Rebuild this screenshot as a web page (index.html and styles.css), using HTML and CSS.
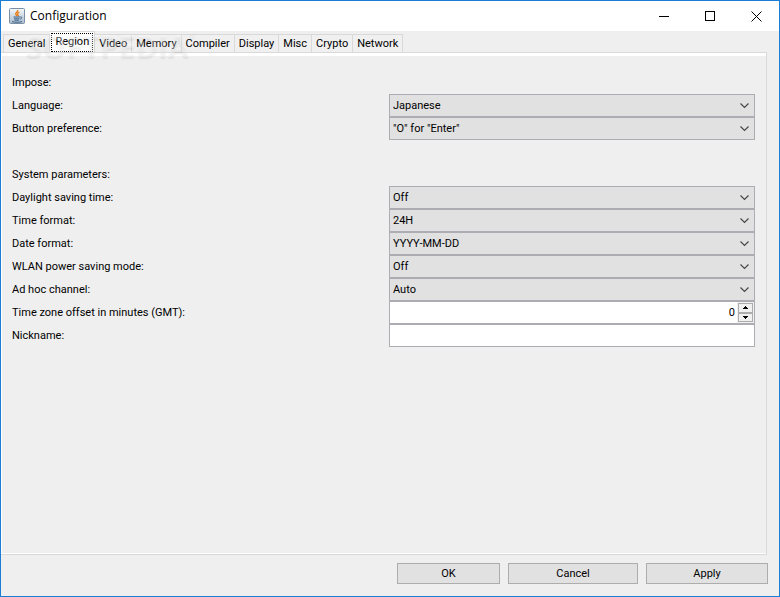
FILE: index.html
```
<!DOCTYPE html>
<html lang="en">
<head>
<meta charset="utf-8">
<title>Configuration</title>
<link rel="stylesheet" href="styles.css">
</head>
<body>
<div class="window">
  <header class="titlebar">
    <svg class="app-icon" width="16" height="16" viewBox="0 0 16 16">
      <defs>
        <linearGradient id="tile" x1="0" y1="0" x2="0" y2="1">
          <stop offset="0" stop-color="#f4f7fa"/>
          <stop offset="1" stop-color="#a9bdce"/>
        </linearGradient>
      </defs>
      <rect x=".5" y=".5" width="15" height="15" rx="1" fill="url(#tile)" stroke="#7b8fa3"/>
      <path d="M8.6 2c.8 1.800-2.800 2.600-1.800 4.400.3.600.9 1 1.200 1.600M10.300 4.200C8.500 5 8 5.800 9 7c.4.500.2 1-.2 1.400" fill="none" stroke="#e8811c" stroke-width="1.400"/>
      <path d="M4.500 9h6.500M5 10.800h5.500M5.500 12.200h4.500M3 13.500c2 1 8 1 10 0M11.200 9c2-.6 2.300 1.500-.2 2.300" fill="none" stroke="#3d6288"/>
    </svg>
    <h1 class="title">Configuration</h1>
    <div class="window-buttons">
      <button type="button" aria-label="Minimize"><svg width="11" height="11"><path d="M0 5.500h10" stroke="#000"/></svg></button>
      <button type="button" aria-label="Maximize"><svg width="11" height="11"><path d="M.5.500h9v9h-9z" fill="none" stroke="#000"/></svg></button>
      <button type="button" aria-label="Close"><svg width="11" height="11"><path d="M.5.500l10 10M10.500.500l-10 10" stroke="#000"/></svg></button>
    </div>
  </header>

  <nav class="tabs" role="tablist">
    <button class="tab" type="button" role="tab">General</button>
    <button class="tab selected" type="button" role="tab" aria-selected="true"><span>Region</span></button>
    <button class="tab" type="button" role="tab">Video</button>
    <button class="tab" type="button" role="tab">Memory</button>
    <button class="tab" type="button" role="tab">Compiler</button>
    <button class="tab" type="button" role="tab">Display</button>
    <button class="tab" type="button" role="tab">Misc</button>
    <button class="tab" type="button" role="tab">Crypto</button>
    <button class="tab" type="button" role="tab">Network</button>
    <div class="watermark" aria-hidden="true">SOFTPEDIA<sup>®</sup></div>
  </nav>

  <main class="panel">
    <section class="group">
      <h2>Impose:</h2>
      <div class="row">
        <label for="language">Language:</label>
        <select id="language"><option>Japanese</option></select>
      </div>
      <div class="row">
        <label for="button-pref">Button preference:</label>
        <select id="button-pref"><option>"O" for "Enter"</option></select>
      </div>
    </section>
    <section class="group">
      <h2>System parameters:</h2>
      <div class="row">
        <label for="daylight">Daylight saving time:</label>
        <select id="daylight"><option>Off</option></select>
      </div>
      <div class="row">
        <label for="time-format">Time format:</label>
        <select id="time-format"><option>24H</option></select>
      </div>
      <div class="row">
        <label for="date-format">Date format:</label>
        <select id="date-format"><option>YYYY-MM-DD</option></select>
      </div>
      <div class="row">
        <label for="wlan">WLAN power saving mode:</label>
        <select id="wlan"><option>Off</option></select>
      </div>
      <div class="row">
        <label for="adhoc">Ad hoc channel:</label>
        <select id="adhoc"><option>Auto</option></select>
      </div>
      <div class="row">
        <label for="timezone">Time zone offset in minutes (GMT):</label>
        <div class="spinner">
          <input id="timezone" type="text" inputmode="numeric" value="0">
          <div class="arrows">
            <button type="button" aria-label="Increase"><svg width="5" height="3"><path d="M2 0h1v1h1v1h1v1H0V2h1V1h1z"/></svg></button>
            <button type="button" aria-label="Decrease"><svg width="5" height="3"><path d="M0 0h5v1H4v1H3v1H2V2H1V1H0z"/></svg></button>
          </div>
        </div>
      </div>
      <div class="row">
        <label for="nickname">Nickname:</label>
        <input id="nickname" class="text" type="text">
      </div>
    </section>
  </main>

  <footer class="actions">
    <button class="ok" type="button">OK</button>
    <button class="cancel" type="button">Cancel</button>
    <button class="apply" type="button">Apply</button>
  </footer>
</div>
</body>
</html>
```
FILE: styles.css
```
* {
  box-sizing: border-box;
}
body {
  margin: 0;
  font: 11px/14px Tahoma, Roboto, sans-serif;
  color: #000;
}
button, input, select {
  margin: 0;
  padding: 0;
  border: 0;
  border-radius: 0;
  font: inherit;
  color: inherit;
}
svg {
  display: block;
  shape-rendering: crispEdges;
}
.window {
  display: flex;
  flex-direction: column;
  min-height: 100vh;
  border: 1px solid #1a7fd4;
  background: #efefef;
}

/* title bar */
.titlebar {
  display: flex;
  align-items: center;
  height: 30px;
  padding-left: 8px;
  background: #fff;
}
.app-icon {
  shape-rendering: auto;
}
.title {
  margin: 0 0 0 5px;
  font: 12px/16px "Open Sans", "Noto Sans", sans-serif;
}
.window-buttons {
  display: flex;
  margin-left: auto;
}
.window-buttons button {
  display: flex;
  align-items: center;
  justify-content: center;
  width: 46px;
  height: 28px;
  background: transparent;
}
.window-buttons button:last-child svg {
  shape-rendering: auto;
}

/* tabs */
.tabs {
  position: relative;
  display: flex;
  align-items: flex-end;
  height: 21px;
  padding-left: 2px;
}
.tab {
  height: 18px;
  padding: 0 4px;
  border: 1px solid #d9d9d9;
  border-width: 1px 1px 0 0;
  background: #f0f0f0;
}
.tab:first-child {
  border-left-width: 1px;
}
.tab.selected {
  height: 21px;
  padding: 0 1px;
  background: #fff;
}
.tab.selected span {
  display: block;
  padding: 1px 3px 2px;
  border: 1px dotted #000;
}
.watermark {
  position: absolute;
  top: 0;
  left: 25px;
  font: bold 30px/30px "Open Sans", sans-serif;
  color: rgba(255, 255, 255, 0.3);
  text-shadow: 0 2px 2px rgba(0, 0, 0, 0.07);
  pointer-events: none;
}
.watermark sup {
  font-size: 8px;
  line-height: 8px;
  vertical-align: top;
}

/* settings */
.panel {
  flex: 1;
  margin-right: 12px;
  padding: 18px 11px 0 11px;
  border: 1px solid #d9d9d9;
  border-left: 0;
  box-shadow: inset 0 3px #fff, inset 1px -1px #fff;
}
.group {
  margin-bottom: 23px;
}
.group h2 {
  margin: 0;
  font-size: 11px;
  font-weight: normal;
  line-height: 23px;
}
.row {
  display: grid;
  grid-template-columns: 377px 1fr;
  align-items: center;
  height: 23px;
}
.row select, .text, .spinner {
  width: 100%;
  height: 23px;
  border: 1px solid #acacb2;
}
.row select {
  appearance: none;
  padding: 0 3px;
  background: #e1e1e1 url("data:image/svg+xml,%3Csvg xmlns='http://www.w3.org/2000/svg' width='9' height='6'%3E%3Cpath d='M.5.5l4 4 4-4' fill='none' stroke='%23484848' stroke-width='1.200'/%3E%3C/svg%3E") no-repeat right 5px center;
}
.text {
  padding: 0 3px;
  background: #fff;
}
.spinner {
  display: flex;
  background: #fff;
}
.spinner input {
  flex: 1;
  min-width: 0;
  padding-right: 2px;
  background: transparent;
  text-align: right;
}
.arrows {
  display: flex;
  flex-direction: column;
  width: 17px;
  padding: 1px;
  background: #f0f0f0;
}
.arrows button {
  display: flex;
  flex: 1;
  align-items: center;
  justify-content: center;
  border: 1px solid #acacac;
  background: #f0f0f0;
}

/* bottom buttons */
.actions {
  display: flex;
  justify-content: flex-end;
  gap: 8px;
  padding: 8px 11px 12px;
}
.actions button {
  height: 21px;
  border: 1px solid #adadad;
  background: #e1e1e1;
}
.ok {
  width: 103px;
}
.cancel {
  width: 130px;
}
.apply {
  width: 122px;
}
```
